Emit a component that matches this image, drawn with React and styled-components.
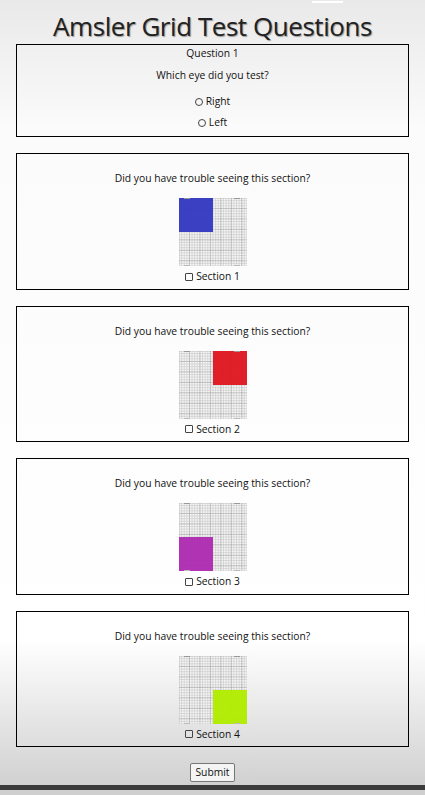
import React from "react";
import styled, { createGlobalStyle } from "styled-components";

const Global = createGlobalStyle`
  html, body {
    margin: 0;
    padding: 0;
  }
  body {
    font-family: "Open Sans", sans-serif;
    background: linear-gradient(#e9e9e9 0px, #fbfbfb 130px, #ffffff 640px, #cfcfcf 790px);
    min-height: 795px;
  }
`;

const Page = styled.div`
  display: flex;
  flex-direction: column;
  align-items: center;
  padding: 0 16px;
  min-height: 790px;
  box-sizing: border-box;
  border-bottom: 5px solid #3b3b3b;
  position: relative;
`;

const TopMark = styled.div`
  position: absolute;
  top: 1px;
  left: 312px;
  width: 31px;
  height: 2px;
  background: #fff;
`;

const Title = styled.h1`
  margin: 8px 0 0;
  font-family: "Open Sans", sans-serif;
  font-weight: 400;
  font-size: 26px;
  line-height: 36px;
  color: #222;
  text-shadow: 1px 1px 1px rgba(0, 0, 0, 0.35);
  letter-spacing: -0.45px;
`;

const Card = styled.div`
  width: 100%;
  box-sizing: border-box;
  border: 1px solid #000;
  display: flex;
  flex-direction: column;
  align-items: center;
  font-family: "Open Sans", sans-serif;
  font-size: 10.3px;
  color: #111;
  margin-top: ${(p) => p.$gap}px;
  padding: ${(p) => p.$pad};
`;

const Line = styled.div`
  line-height: 15px;
  margin-top: ${(p) => p.$mt || 0}px;
`;

const Option = styled.label`
  display: flex;
  align-items: center;
  gap: 3px;
  line-height: 15px;
  margin-top: ${(p) => p.$mt || 0}px;
`;

const Radio = styled.span`
  width: 6px;
  height: 6px;
  border: 1px solid #444;
  border-radius: 50%;
`;

const Box = styled.span`
  width: 6px;
  height: 6px;
  border: 1px solid #444;
  border-radius: 1px;
`;

const Submit = styled.button`
  margin-top: 16px;
  font-family: "Open Sans", sans-serif;
  font-size: 10.3px;
  color: #111;
  background: #f4f4f4;
  border: 1px solid #777;
  border-radius: 2px;
  padding: 1px 4px;
  line-height: 15px;
`;

const Picture = styled.svg`
  display: block;
  margin-top: 12px;
`;

const colors = ["#3438bf", "#df1820", "#ad2cb0", "#b2ec00"];

function Grid({ q, color }) {
  const size = 68;
  const n = 26;
  const step = size / n;
  const lines = [];
  for (let i = 0; i <= n; i++) {
    const p = i * step;
    const dark = i % 4 === 0;
    const c = dark ? "#9a9a9a" : "#c6c6c6";
    lines.push(<line key={"v" + i} x1={p} y1={0} x2={p} y2={size} stroke={c} strokeWidth="0.6" />);
    lines.push(<line key={"h" + i} x1={0} y1={p} x2={size} y2={p} stroke={c} strokeWidth="0.6" />);
  }
  const qx = q % 2 === 0 ? 0 : 34;
  const qy = q < 2 ? 0 : 34;
  return (
    <Picture width={size} height={size} viewBox={`0 0 ${size} ${size}`}>
      <rect x="0" y="0" width={size} height={size} fill="#f6f6f6" />
      {lines}
      <rect x={qx} y={qy} width="34" height="34" fill={color} opacity="0.96" />
      <rect x="5" y="0" width="6" height="1" fill="#999" />
      <rect x="55" y="0" width="6" height="1" fill="#999" />
      <rect x="5" y="67" width="6" height="1" fill="#bbb" />
      <rect x="55" y="67" width="6" height="1" fill="#bbb" />
    </Picture>
  );
}

export default function App() {
  return (
    <>
      <Global />
      <Page>
        <TopMark />
        <Title>Amsler Grid Test Questions</Title>
        <Card $gap={0} $pad="1px 0 6px">
          <Line>Question 1</Line>
          <Line $mt={7}>Which eye did you test?</Line>
          <Option $mt={11}><Radio />Right</Option>
          <Option $mt={6}><Radio />Left</Option>
        </Card>
        {colors.map((c, i) => (
          <Card key={i} $gap={16} $pad="17px 0 4.5px">
            <Line>Did you have trouble seeing this section?</Line>
            <Grid q={i} color={c} />
            <Option $mt={3}><Box />Section {i + 1}</Option>
          </Card>
        ))}
        <Submit>Submit</Submit>
      </Page>
    </>
  );
}
